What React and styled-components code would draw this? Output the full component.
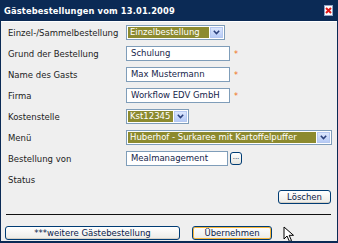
import React from "react";
import styled, { createGlobalStyle } from "styled-components";

const GlobalStyle = createGlobalStyle`
  html, body {
    margin: 0;
    padding: 0;
    background: #efefef;
  }
  body {
    font-family: "DejaVu Sans", Verdana, sans-serif;
    font-size: 8.5px;
  }
`;

const fields = [
	{ label: "Einzel-/Sammelbestellung", kind: "select", value: "Einzelbestellung", width: 99 },
	{ label: "Grund der Bestellung", kind: "input", value: "Schulung", required: true },
	{ label: "Name des Gasts", kind: "input", value: "Max Mustermann", required: true },
	{ label: "Firma", kind: "input", value: "Workflow EDV GmbH", required: true },
	{ label: "Kostenstelle", kind: "select", value: "Kst12345", width: 63 },
	{ label: "Menü", kind: "select", value: "Huberhof - Surkaree mit Kartoffelpuffer", width: 206 },
	{ label: "Bestellung von", kind: "lookup", value: "Mealmanagement" },
	{ label: "Status", kind: "none" },
];

const Chevron = () => (
	<svg width="7" height="5" viewBox="0 0 7 5">
		<path d="M0.8 0.8 L3.5 3.6 L6.2 0.8" fill="none" stroke="#2a3f7a" strokeWidth="1.5" />
	</svg>
);

const App = () => {
	return (
		<>
			<GlobalStyle />
			<Dialog>
				<TitleBar>
					<Title>Gästebestellungen vom 13.01.2009</Title>
					<CloseBox>
						<svg width="7" height="7" viewBox="0 0 7 7">
							<path d="M1 1 L6 6 M6 1 L1 6" stroke="#e01818" strokeWidth="2" />
						</svg>
					</CloseBox>
				</TitleBar>
				<Body>
					<Form>
						{fields.map((f) => (
							<Row key={f.label}>
								<Label>{f.label}</Label>
								<Control>
									{f.kind === "select" && (
										<Select style={{ width: f.width }}>
											<SelectValue>{f.value}</SelectValue>
											<ArrowBox>
												<Chevron />
											</ArrowBox>
										</Select>
									)}
									{f.kind === "input" && <Input>{f.value}</Input>}
									{f.kind === "lookup" && (
										<>
											<Input narrow>{f.value}</Input>
											<DotsButton>...</DotsButton>
										</>
									)}
									{f.required && <Required>*</Required>}
								</Control>
							</Row>
						))}
					</Form>
					<DeleteRow>
						<Button>Löschen</Button>
					</DeleteRow>
					<Separator />
					<Footer>
						<Button wide>***weitere Gästebestellung</Button>
						<Button focused>Übernehmen</Button>
					</Footer>
					<Cursor width="14" height="18" viewBox="0 0 14 18">
						<path
							d="M1 1 L1 13 L4 10 L6.5 15.5 L8.5 14.6 L6.2 9.3 L10.5 9.3 Z"
							fill="#fff"
							stroke="#000"
							strokeWidth="1"
							strokeLinejoin="round"
						/>
					</Cursor>
				</Body>
			</Dialog>
		</>
	);
};

const Dialog = styled.div`
	width: 338px;
	height: 243px;
	box-sizing: border-box;
	border-left: 1px solid #0b2a55;
	border-right: 1px solid #0b2a55;
	border-bottom: 2px solid #0b2a55;
	background: #efefef;
	display: flex;
	flex-direction: column;
	overflow: hidden;
`;

const TitleBar = styled.div`
	height: 21px;
	background: #0b2a55;
	display: flex;
	align-items: center;
	justify-content: space-between;
	padding: 0 4px 0 3px;
	border-bottom: 1px solid #ffffff;
	flex-shrink: 0;
`;

const Title = styled.div`
	color: #ffffff;
	font-weight: bold;
	font-size: 8.3px;
	letter-spacing: 0.15px;
`;

const CloseBox = styled.div`
	width: 9px;
	height: 11px;
	background: #ffffff;
	border: 1px solid #8fa4c8;
	box-sizing: border-box;
	display: flex;
	align-items: center;
	justify-content: center;
`;

const Body = styled.div`
	position: relative;
	flex: 1;
	display: flex;
	flex-direction: column;
	padding: 0 5px 0 4px;
`;

const Form = styled.div`
	display: flex;
	flex-direction: column;
	padding-left: 3px;
`;

const Row = styled.div`
	display: flex;
	align-items: center;
	height: 21px;
`;

const Label = styled.div`
	width: 118px;
	color: #1c1c1c;
	white-space: nowrap;
`;

const Control = styled.div`
	display: flex;
	align-items: center;
	gap: 3px;
`;

const Select = styled.div`
	height: 15px;
	box-sizing: border-box;
	border: 1px solid #7f9db9;
	background: #ffffff;
	display: flex;
	padding: 1px;
`;

const SelectValue = styled.div`
	flex: 1;
	background: #8c8a2e;
	color: #ffffff;
	padding: 0 2px;
	line-height: 11px;
	white-space: nowrap;
	overflow: hidden;
`;

const ArrowBox = styled.div`
	width: 13px;
	margin-left: 1px;
	background: linear-gradient(#dbe6fd, #b7cbf6);
	border: 1px solid #b5c8f0;
	box-sizing: border-box;
	display: flex;
	align-items: center;
	justify-content: center;
`;

const Input = styled.div`
	width: ${(p) => (p.narrow ? "102px" : "104px")};
	height: 15px;
	box-sizing: border-box;
	border: 1px solid #7f9db9;
	background: #ffffff;
	color: #15254a;
	padding: 0 4px;
	line-height: 13px;
	white-space: nowrap;
	overflow: hidden;
`;

const Required = styled.span`
	color: #f07020;
	font-size: 8px;
	margin-left: 1px;
	margin-top: 1px;
`;

const DotsButton = styled.div`
	width: 12px;
	height: 13px;
	box-sizing: border-box;
	border: 1px solid #003c74;
	border-radius: 3px;
	background: linear-gradient(#ffffff, #e6e5de);
	color: #0a1a4a;
	font-size: 7px;
	line-height: 9px;
	text-align: center;
	margin-left: -1px;
`;

const DeleteRow = styled.div`
	display: flex;
	justify-content: flex-end;
	padding-right: 1px;
`;

const Button = styled.div`
	height: 14px;
	box-sizing: border-box;
	padding: 0 ${(p) => (p.wide ? "0" : "8px")};
	width: ${(p) => (p.wide ? "175px" : "auto")};
	min-width: ${(p) => (p.focused ? "80px" : "0")};
	border: 1px solid #003c74;
	border-radius: 3px;
	background: linear-gradient(#ffffff, #ecebe6);
	box-shadow: ${(p) => (p.focused ? "inset 0 0 0 1px #f5b53a" : "inset 0 -1px 0 #d6d0c5")};
	color: #0a1a4a;
	display: flex;
	align-items: center;
	justify-content: center;
	white-space: nowrap;
`;

const Separator = styled.div`
	height: 1px;
	background: #111111;
	margin: 10px 1px 0 1px;
`;

const Footer = styled.div`
	display: flex;
	gap: 12px;
	margin-top: 11px;
`;

const Cursor = styled.svg`
	position: absolute;
	left: 282px;
	top: 204px;
`;

export default App;
